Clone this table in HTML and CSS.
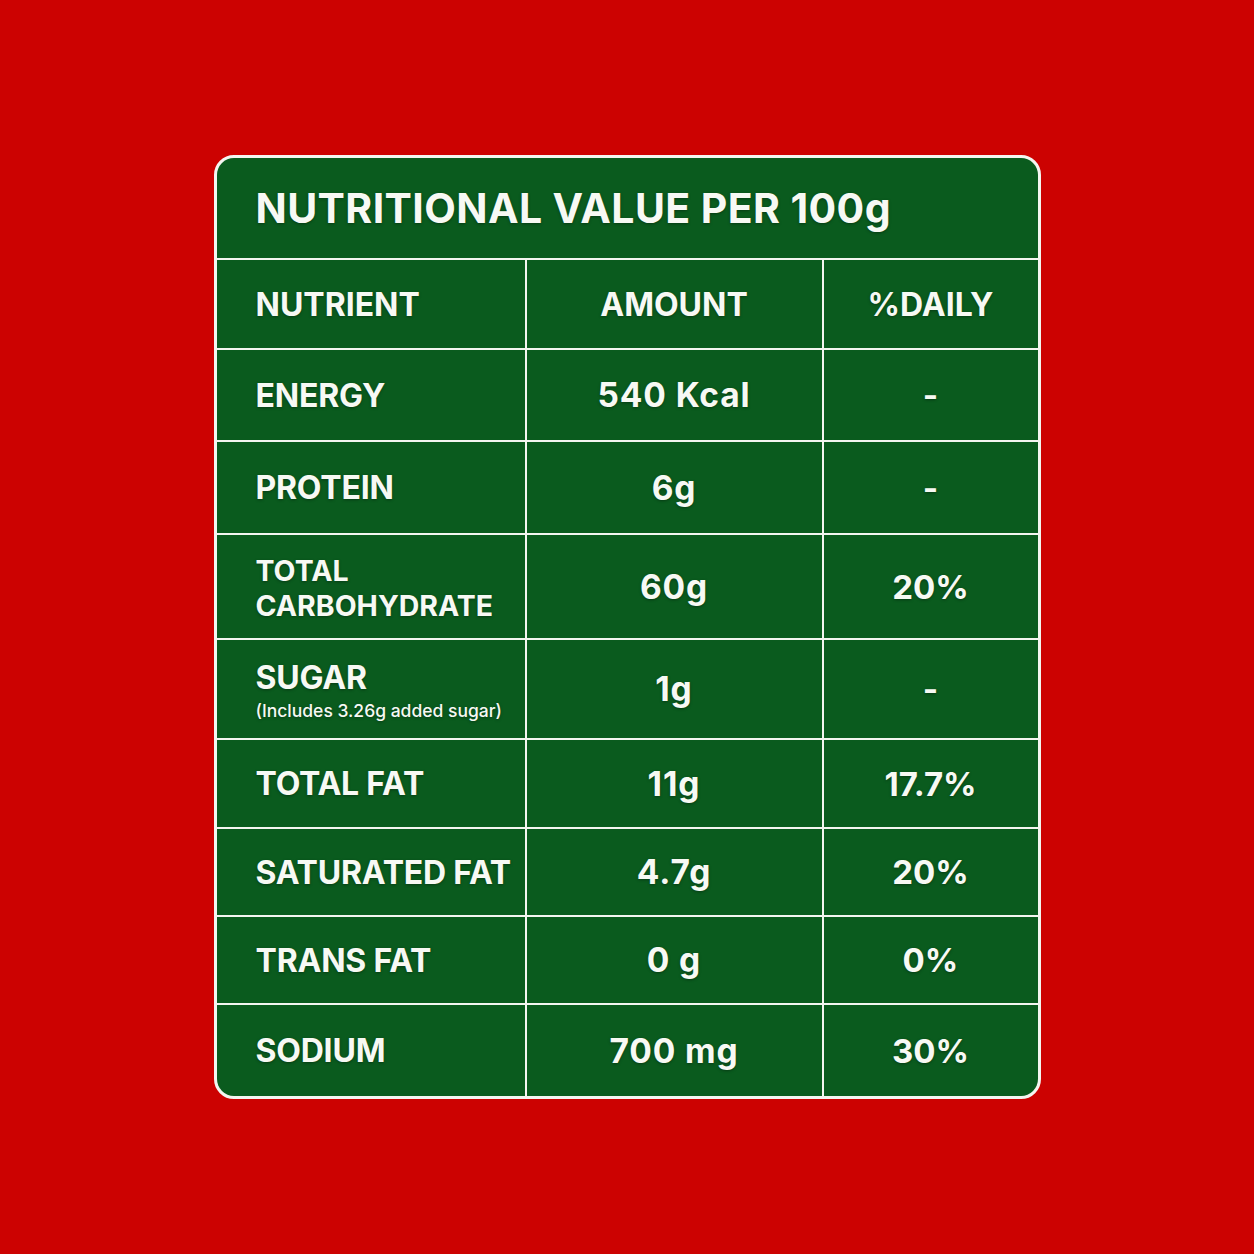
FILE: index.html
```html
<!DOCTYPE html>
<html lang="en">
<head>
<meta charset="utf-8">
<title>Nutritional Value</title>
<link rel="stylesheet" href="styles.css">
</head>
<body>
<main class="page">
  <section class="card">
    <div class="grid">
      <div class="cell title">NUTRITIONAL VALUE PER 100g</div>

      <div class="cell left head">NUTRIENT</div>
      <div class="cell mid head">AMOUNT</div>
      <div class="cell right head">%DAILY</div>

      <div class="cell left">ENERGY</div>
      <div class="cell mid">540 Kcal</div>
      <div class="cell right">-</div>

      <div class="cell left">PROTEIN</div>
      <div class="cell mid">6g</div>
      <div class="cell right">-</div>

      <div class="cell left two-line">TOTAL<br>CARBOHYDRATE</div>
      <div class="cell mid">60g</div>
      <div class="cell right">20%</div>

      <div class="cell left stack">
        <span>SUGAR</span>
        <span class="note">(Includes 3.26g added sugar)</span>
      </div>
      <div class="cell mid">1g</div>
      <div class="cell right">-</div>

      <div class="cell left">TOTAL FAT</div>
      <div class="cell mid">11g</div>
      <div class="cell right">17.7%</div>

      <div class="cell left">SATURATED FAT</div>
      <div class="cell mid">4.7g</div>
      <div class="cell right">20%</div>

      <div class="cell left">TRANS FAT</div>
      <div class="cell mid">0 g</div>
      <div class="cell right">0%</div>

      <div class="cell left">SODIUM</div>
      <div class="cell mid">700 mg</div>
      <div class="cell right">30%</div>
    </div>
  </section>
</main>
</body>
</html>
```
FILE: styles.css
```css
html, body {
  margin: 0;
  padding: 0;
}
body {
  background: #cc0201;
  font-family: Inter, "Noto Sans", "DejaVu Sans", sans-serif;
  color: #f7f9f4;
}
.page {
  width: 1254px;
  height: 1254px;
  display: flex;
  align-items: center;
  justify-content: center;
}
.card {
  width: 827px;
  height: 944px;
  box-sizing: border-box;
  border: 3px solid #f4f6f1;
  border-radius: 20px;
  overflow: hidden;
  background: #f4f6f1;
}
.grid {
  display: grid;
  grid-template-columns: 308px 295px 214px;
  grid-template-rows: 100px 88px 90px 91px 103px 98px 87px 86px 86px 91px;
  gap: 2px;
  height: 100%;
}
.cell {
  background: #0a5b1e;
  display: flex;
  align-items: center;
  font-weight: 700;
  font-size: 32px;
  letter-spacing: -0.2px;
  text-shadow: 0 1px 3px rgba(0, 0, 0, 0.35);
}
.title {
  grid-column: 1 / 4;
  padding-left: 39px;
  font-size: 41px;
  letter-spacing: 0.4px;
}
.left {
  padding-left: 39px;
}
.mid, .right {
  justify-content: center;
}
.mid {
  font-size: 33.5px;
  letter-spacing: 0.9px;
}
.right {
  font-size: 33px;
  letter-spacing: 0;
}
.cell.head {
  font-size: 32px;
  letter-spacing: 0;
}
.two-line {
  font-size: 28.5px;
  line-height: 35px;
  letter-spacing: 0;
  padding-top: 2px;
}
.stack {
  flex-direction: column;
  align-items: flex-start;
  justify-content: center;
}
.stack .note {
  font-size: 17.5px;
  font-weight: 500;
  letter-spacing: 0;
  margin-top: 3px;
}
```
